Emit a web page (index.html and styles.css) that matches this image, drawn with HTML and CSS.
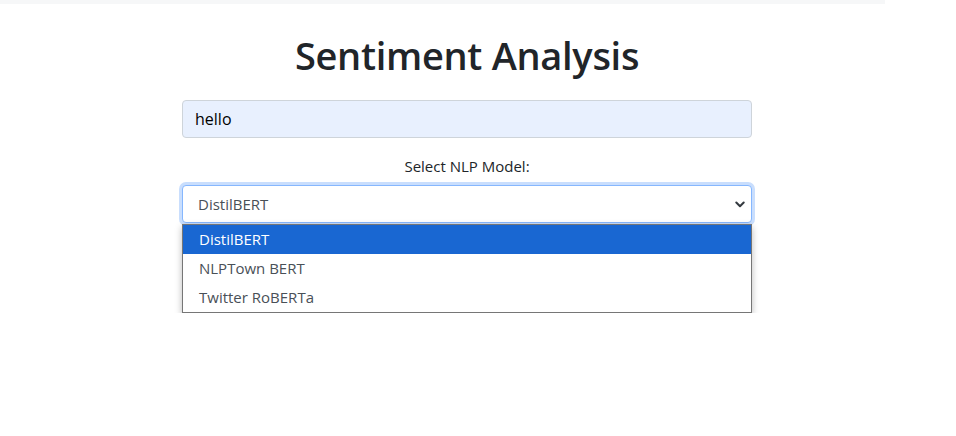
FILE: index.html
```html
<!DOCTYPE html>
<html>
<head>
<meta charset="utf-8">
<link rel="stylesheet" href="styles.css">
</head>
<body>
<div class="topbar"></div>
<main class="page">
  <h1 class="title">Sentiment Analysis</h1>
  <div class="field input">hello</div>
  <div class="label">Select NLP Model:</div>
  <div class="field select">
    <span>DistilBERT</span>
    <svg class="chev" width="10" height="7" viewBox="0 0 10 7"><path d="M1.3 1.5L5 5.2L8.7 1.5" fill="none" stroke="#343a40" stroke-width="2" stroke-linecap="round" stroke-linejoin="round"/></svg>
  </div>
  <div class="dropdown">
    <div class="opt active">DistilBERT</div>
    <div class="opt">NLPTown BERT</div>
    <div class="opt">Twitter RoBERTa</div>
  </div>
</main>
</body>
</html>
```
FILE: styles.css
```css
html, body { margin: 0; padding: 0; background: #fff; }
body { font-family: "Open Sans", "Noto Sans", sans-serif; color: #212529; }
.topbar { width: 885px; height: 4px; background: #f6f7f8; }
.page { width: 570px; margin-left: 182px; display: flex; flex-direction: column; align-items: stretch; }
.title { margin: 27px 0 0; text-align: center; font-size: 38px; font-weight: 600; line-height: 48px; letter-spacing: -0.3px; color: #212529; }
.field { box-sizing: border-box; height: 38px; border: 1px solid #ced4da; border-radius: 4px; font-size: 15px; display: flex; align-items: center; }
.input { margin-top: 21px; background: #e8f0fe; padding-left: 12px; color: #000; font-size: 16px; }
.label { margin-top: 17px; text-align: center; font-size: 15px; line-height: 22px; color: #212529; }
.select { margin-top: 8px; background: #fff; border-color: #86b7fe; box-shadow: 0 0 0 3px #c9defd; padding: 0 6px 0 15px; justify-content: space-between; color: #495057; }
.chev { display: block; }
.dropdown { position: relative; z-index: 5; margin-top: 1px; background: #fff; border: 1px solid #767676; box-shadow: 0 3px 7px rgba(0,0,0,0.28); }
.opt { height: 29px; line-height: 29px; padding-left: 16px; font-size: 15px; color: #495057; }
.opt.active { background: #1967d2; color: #fff; }
```
